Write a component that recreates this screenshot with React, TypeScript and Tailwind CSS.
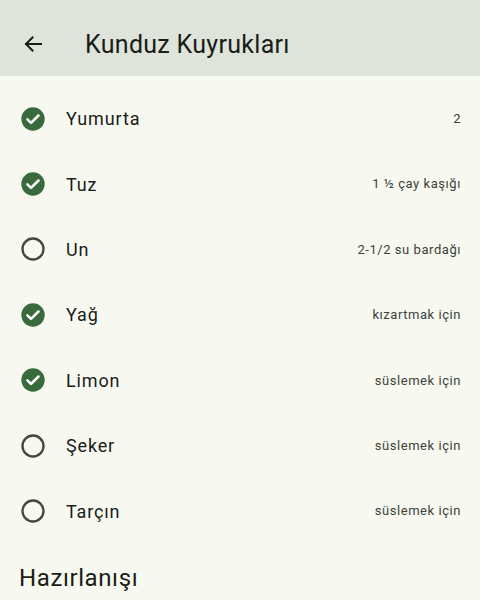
import React from "react";

const items: { name: string; amount: string; done: boolean }[] = [
  { name: "Yumurta", amount: "2", done: true },
  { name: "Tuz", amount: "1 ½ çay kaşığı", done: true },
  { name: "Un", amount: "2-1/2 su bardağı", done: false },
  { name: "Yağ", amount: "kızartmak için", done: true },
  { name: "Limon", amount: "süslemek için", done: true },
  { name: "Şeker", amount: "süslemek için", done: false },
  { name: "Tarçın", amount: "süslemek için", done: false },
];

function CheckIcon({ done }: { done: boolean }) {
  if (done) {
    return (
      <svg width="28" height="28" viewBox="0 0 24 24" className="shrink-0">
        <circle cx="12" cy="12" r="10" fill="#386a3e" />
        <path d="M7.2 12.3l3.1 3.1 6.4-6.4" fill="none" stroke="#ffffff" strokeWidth="2.2" strokeLinecap="round" strokeLinejoin="round" />
      </svg>
    );
  }
  return (
    <svg width="28" height="28" viewBox="0 0 24 24" className="shrink-0">
      <circle cx="12" cy="12" r="9" fill="none" stroke="#43483f" strokeWidth="2" />
    </svg>
  );
}

export default function App() {
  return (
    <div className="w-[480px] h-[600px] overflow-hidden bg-[#f7f9f1] text-[#1a1c18]" style={{ fontFamily: "Roboto, 'Noto Sans', sans-serif" }}>
      {/* App bar */}
      <header className="h-[76px] bg-[#dee4da] flex items-center pt-[12px]">
        <div className="w-[66px] flex justify-center">
          <svg width="24" height="24" viewBox="0 0 24 24" className="ml-[-1px]">
            <path d="M20 12H5M11.5 5.5L5 12l6.5 6.5" fill="none" stroke="#1a1c18" strokeWidth="2" strokeLinecap="square" />
          </svg>
        </div>
        <h1 className="ml-[19px] text-[25px] tracking-[0.3px] leading-none">Kunduz Kuyrukları</h1>
      </header>

      {/* Ingredients */}
      <ul className="pt-[10px]">
        {items.map((it) => (
          <li key={it.name} className="h-[65.4px] flex items-center pl-[19px] pr-[19px]">
            <CheckIcon done={it.done} />
            <span className="ml-[19px] text-[18px] tracking-[0.85px] flex-1">{it.name}</span>
            <span className="text-[13px] tracking-[0.55px] text-[#3d4239]">{it.amount}</span>
          </li>
        ))}
      </ul>

      <h2 className="mt-[18px] px-[19px] text-[24px] tracking-[0.6px] leading-[32px]">Hazırlanışı</h2>
    </div>
  );
}
